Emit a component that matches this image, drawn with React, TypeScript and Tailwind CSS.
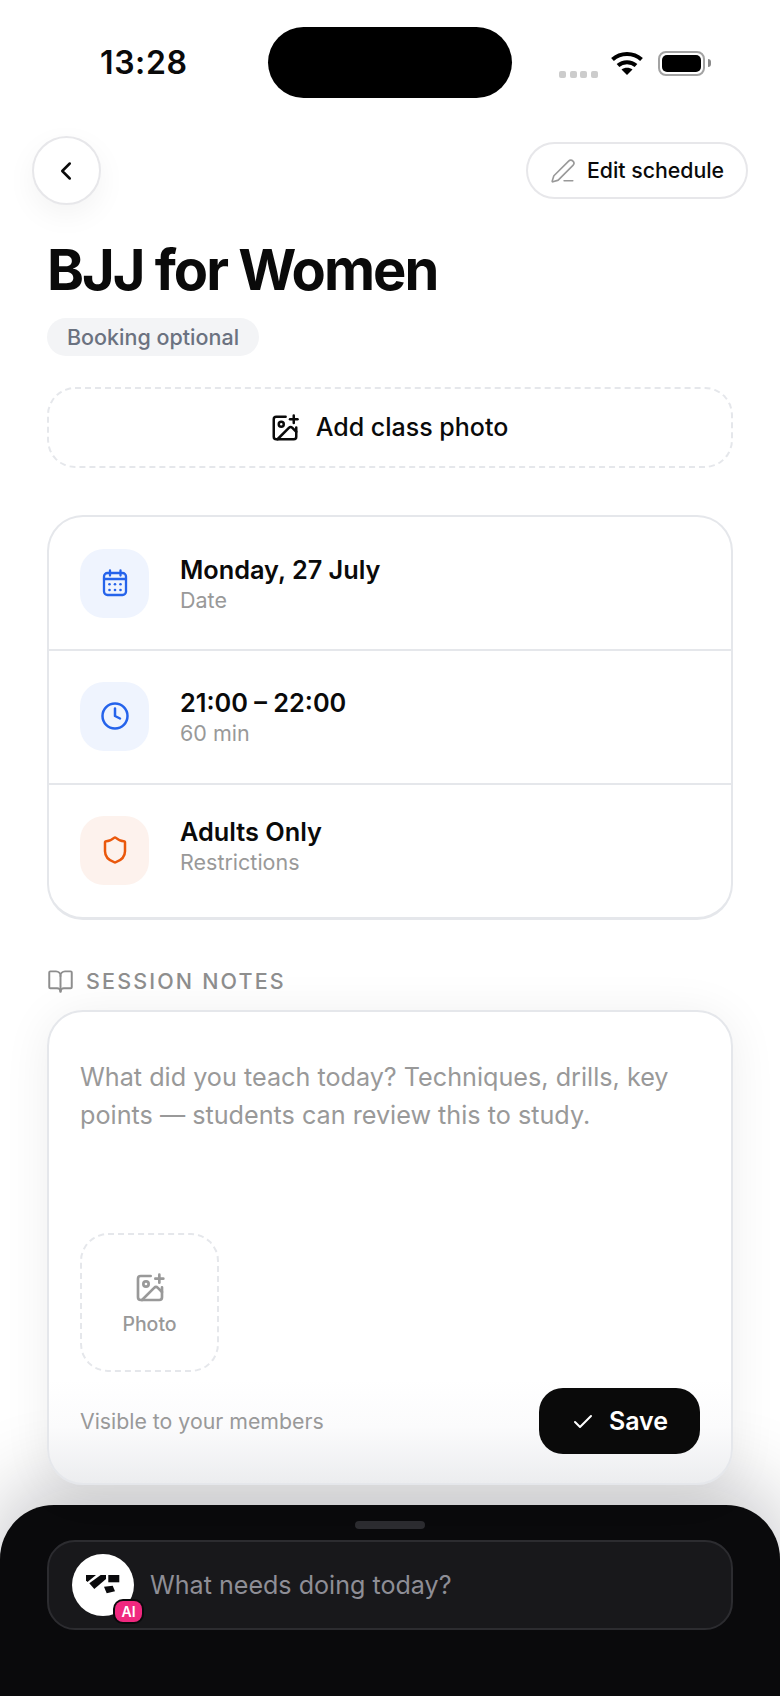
import React from 'react';
import { BookOpen, Check, ChevronLeft, Clock, ImagePlus, PenLine, Shield } from 'lucide-react';

const CalendarIcon = () => (
  <svg width="30" height="30" viewBox="0 0 30 30" fill="none" stroke="#2563eb" strokeWidth="2.300" strokeLinecap="round">
    <rect x="4" y="5" width="22" height="22" rx="3.500" />
    <path d="M4 11h22M10 2.500v5M20.500 2.500v5" />
    <g stroke="none" fill="#2563eb">
      {[9.500, 15, 20.500].map((x) => (
        <React.Fragment key={x}>
          <circle cx={x} cy="16.300" r="1.300" />
          <circle cx={x} cy="22" r="1.300" />
        </React.Fragment>
      ))}
    </g>
  </svg>
);

const Logo = () => (
  <svg width="35" height="22" viewBox="0 0 35 22" fill="#0a0a0c">
    <path d="M0 1h10L1.500 8 0 6.500z" />
    <path d="M14.700 1H20v4L8.300 15 3.300 9.300z" />
    <rect x="22.300" y="1" width="11" height="7.300" />
    <path d="M18 12.700l8.700-1 2.300 5.600-8.300 2z" />
  </svg>
);

const Row = ({ icon, tint, title, sub, last, lift }: { icon: React.ReactNode; tint: string; title: string; sub: string; last?: boolean; lift?: boolean }) => (
  <div className={`flex items-center gap-[31px] pl-[31px] ${last ? 'h-[132px]' : 'h-[134px] border-b-2 border-[#e5e7eb]'} ${lift ? 'pb-[2px]' : ''}`}>
    <div className={`flex h-[69px] w-[69px] items-center justify-center rounded-[24px] ${tint}`}>{icon}</div>
    <div className={`flex flex-col ${last ? 'mb-[6px]' : 'mt-[4px]'}`}>
      <span className="text-[25.300px] leading-[31px] font-semibold text-[#0a0a0a]">{title}</span>
      <span className="text-[21.500px] leading-[31px] text-[#999999]">{sub}</span>
    </div>
  </div>
);

export default function App() {
  return (
    <div className="relative flex h-[1696px] w-[780px] flex-col overflow-hidden bg-white font-['Inter',sans-serif] text-[#0a0a0a]">
      {/* Status bar */}
      <div className="flex h-[136px] pt-[27px]">
        <span className="ml-[100px] w-[168px] text-[32px] leading-[71px] font-semibold tracking-[0.6px] text-[#0a0a0a]">13:28</span>
        <div className="h-[71px] w-[244px] rounded-[36px] bg-black" />
        <div className="ml-[47px] flex h-[71px] items-center">
          <div className="mt-[7px] flex gap-[3.500px] self-center pt-[16px]">
            <span className="h-[7px] w-[7px] rounded-[2px] bg-[#cccccc]" />
            <span className="h-[7px] w-[7px] rounded-[2px] bg-[#cccccc]" />
            <span className="h-[7px] w-[7px] rounded-[2px] bg-[#cccccc]" />
            <span className="h-[7px] w-[7px] rounded-[2px] bg-[#cccccc]" />
          </div>
          <svg className="ml-[13px] mt-[1px]" width="32" height="24" viewBox="0 0 32 24" fill="none" stroke="#000" strokeWidth="4">
            <path d="M1.500 8.500C9.500 1 22.500 1 30.500 8.500" />
            <path d="M7 14.500C12 10 20 10 25 14.500" />
            <path d="M16 24l-5.500-5.500C13.500 16 18.500 16 21.500 18.500z" fill="#000" stroke="none" />
          </svg>
          <div className="ml-[15px] mt-[1px] flex h-[25px] w-[47px] items-center justify-center rounded-[8px] border-2 border-[#a3a3a3]">
            <div className="h-[17px] w-[39px] rounded-[5px] bg-black" />
          </div>
          <div className="ml-[3px] mt-[1px] h-[8px] w-[3px] rounded-r-full bg-[#8a8a8a]" />
        </div>
      </div>

      {/* Nav */}
      <div className="flex items-center justify-between pr-[32px] pl-[32px]">
        <button className="flex h-[69px] w-[69px] items-center justify-center rounded-full border-2 border-[#e7e7ea] bg-white pr-[2px] shadow-[0_10px_30px_rgba(0,0,0,0.05)]">
          <ChevronLeft size={30} strokeWidth={2} color="#0a0a0a" />
        </button>
        <button className="flex h-[57px] w-[222px] items-center justify-center gap-[11px] rounded-full border-2 border-[#e7e7ea] bg-white text-[21.300px] font-medium text-[#0a0a0a]">
          <PenLine size={26} strokeWidth={1.5} color="#999999" />
          Edit schedule
        </button>
      </div>

      {/* Heading */}
      <div className="flex flex-col items-start px-[47px]">
        <h1 className="mt-[31px] text-[56px] leading-[68px] font-bold tracking-[-2px] text-[#0a0a0a]">BJJ for Women</h1>
        <span className="mt-[14px] flex h-[38px] items-center rounded-full bg-[#f3f4f6] px-[20px] text-[21.500px] font-medium text-[#6b7280]">Booking optional</span>
        <button className="mt-[31px] flex h-[81px] w-full items-center justify-center gap-[16px] rounded-[28px] border-2 border-dashed border-[#e5e7eb] pt-[1px] pr-[2px] text-[25px] font-medium text-[#0a0a0a]">
          <ImagePlus size={30} strokeWidth={2} color="#0a0a0a" />
          Add class photo
        </button>
      </div>

      {/* Details card */}
      <div className="mx-[47px] mt-[47px] rounded-[36px] border-2 border-b-[3px] border-[#e5e7eb] bg-white">
        <Row icon={<CalendarIcon />} tint="bg-[#eff4fe]" title="Monday, 27 July" sub="Date" />
        <Row icon={<Clock size={30} strokeWidth={2} color="#2563eb" />} tint="bg-[#eff4fe]" title="21:00 – 22:00" sub="60 min" lift />
        <Row icon={<Shield size={30} strokeWidth={2} color="#ea580c" />} tint="bg-[#fdf2ed]" title="Adults Only" sub="Restrictions" last lift />
      </div>

      {/* Session notes */}
      <div className="mx-[47px] mt-[46px] flex h-[30px] items-center gap-[12px] text-[#8e8e8e]">
        <BookOpen size={27} strokeWidth={1.75} />
        <span className="text-[21.500px] font-medium tracking-[0.1em]">SESSION NOTES</span>
      </div>
      <div className="relative z-10 mx-[47px] mt-[14px] flex h-[475px] flex-col rounded-[36px] border-2 border-[#e5e7eb] bg-[linear-gradient(to_bottom,#ffffff_78%,#fbfbfc_88%,#ecedef_100%)] pt-[46px] pr-[31px] pl-[31px] shadow-[0_4px_48px_rgba(0,0,0,0.07)]">
        <p className="text-[25.200px] leading-[38px] text-[#999999]">
          What did you teach today? Techniques, drills, key
          <br />
          points — students can review this to study.
        </p>
        <div className="mt-[99px] flex h-[139px] w-[139px] flex-col items-center justify-center gap-[6px] rounded-[28px] border-2 border-dashed border-[#e5e7eb] pt-[4px] text-[#999999]">
          <ImagePlus size={32} strokeWidth={2} />
          <span className="text-[19.500px] leading-[28px] font-medium">Photo</span>
        </div>
        <div className="mt-[16px] flex items-center justify-between">
          <span className="pt-[2px] text-[21.300px] text-[#999999]">Visible to your members</span>
          <button className="flex h-[66px] w-[161px] items-center justify-center gap-[14px] rounded-[24px] bg-[#0a0a0a] pt-[1px] text-[25px] font-semibold text-white">
            <Check size={24} strokeWidth={2} />
            Save
          </button>
        </div>
      </div>

      {/* Bottom sheet */}
      <div className="relative mt-[20px] flex h-[191px] flex-col items-center rounded-t-[54px] bg-[#0a0a0c] px-[47px] pt-[16px] shadow-[0_-20px_80px_rgba(10,10,20,0.24)]">
        <div className="h-[8px] w-[70px] rounded-full bg-[#2c2c30]" />
        <div className="mt-[11px] flex h-[90px] w-full items-center gap-[16px] rounded-[28px] border-2 border-[#2c2c30] bg-[#18181b] pl-[23px]">
          <div className="relative flex h-[62px] w-[62px] items-center justify-center rounded-full bg-white">
            <Logo />
            <span className="absolute right-[-8px] bottom-[-6px] flex h-[21px] w-[27px] items-center justify-center rounded-[8px] bg-[#f0287f] text-[14px] font-semibold text-white ring-2 ring-[#0a0a0c]">AI</span>
          </div>
          <span className="pt-[2px] text-[25.100px] text-[#8e8e96]">What needs doing today?</span>
        </div>
      </div>
    </div>
  );
}
